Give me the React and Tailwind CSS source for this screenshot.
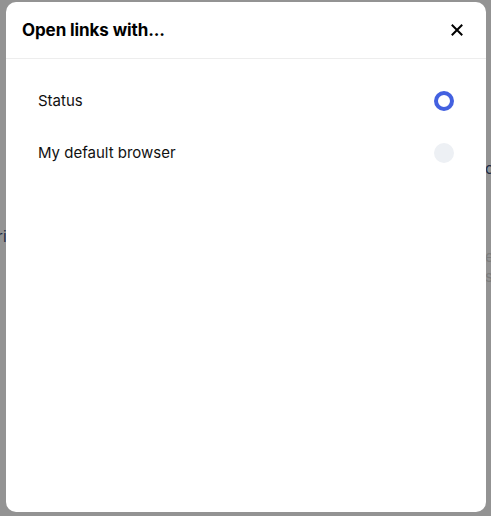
import { useState } from 'react';

function Radio({ checked }) {
  // selected = blue ring, unselected = pale grey disc
  return checked ? (
    <span className="w-5 h-5 rounded-full border-[4px] border-[#4361e0] bg-white" />
  ) : (
    <span className="w-5 h-5 rounded-full bg-[#edf0f4]" />
  );
}

export default function App() {
  const [choice, setChoice] = useState('status');

  const options = [
    { id: 'status', label: 'Status' },
    { id: 'default', label: 'My default browser' },
  ];

  return (
    <div
      className="relative h-[516px] w-[491px] overflow-hidden bg-[#939393]"
      style={{ fontFamily: 'Inter, "Noto Sans", sans-serif' }}
    >
      {/* page behind the dialog, mostly hidden */}
      <span className="absolute left-[-3px] top-[226px] text-[15px] text-[#1d2b44]">ri</span>
      <span className="absolute left-[485px] top-[158px] text-[15px] text-[#1d2b44]">c</span>
      <span className="absolute left-[485px] top-[246px] text-[15px] text-[#7d7d7d]">e</span>
      <span className="absolute left-[485px] top-[266px] text-[15px] text-[#7d7d7d]">s</span>

      {/* Dialog */}
      <div className="absolute left-[6px] top-[2px] w-[480px] h-[510px] bg-white rounded-[10px] flex flex-col">
        <div className="h-[57px] flex items-center justify-between pl-4 pr-[22px] border-b border-[#ededed]">
          <h2 className="text-[17px] font-bold text-black tracking-[-0.1px] pt-[1px]">Open links with...</h2>
          <button className="text-black">
            <svg width="14" height="14" viewBox="0 0 14 14" fill="none" stroke="currentColor" strokeWidth="2" strokeLinecap="square">
              <path d="M2.5 2.5L11.5 11.5M11.5 2.5L2.5 11.5" />
            </svg>
          </button>
        </div>

        <div className="pt-[16px] px-8">
          {options.map(opt => (
            <div
              key={opt.id}
              onClick={() => setChoice(opt.id)}
              className="h-[52px] flex items-center justify-between cursor-pointer"
            >
              <span className="text-[15px] text-[#111111]">{opt.label}</span>
              <Radio checked={choice === opt.id} />
            </div>
          ))}
        </div>
      </div>
    </div>
  );
}
